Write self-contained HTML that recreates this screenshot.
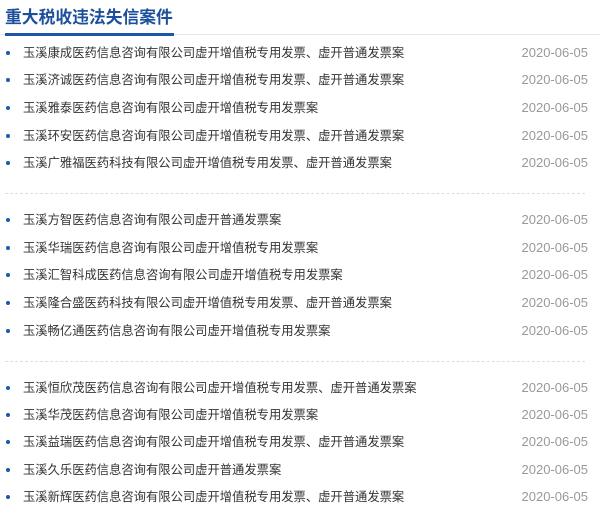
<!DOCTYPE html>
<html><head><meta charset="utf-8"><style>
body{margin:0;width:600px;height:516px;background:#fff;font-family:"Liberation Sans","Noto Sans CJK SC",sans-serif;position:relative;overflow:hidden}
.t{position:absolute;left:5px;top:6px;font-size:16.8px;font-weight:bold;color:#1c4f9c;line-height:24px}
.gl{position:absolute;left:0;top:34px;width:600px;height:1px;background:#e6e6e6}
.bl{position:absolute;left:5px;top:33px;width:169px;height:3px;background:#1c56a8}
.r{position:absolute;left:0;width:600px;height:20px;line-height:20px;font-size:12.3px;color:#333}
.r i{position:absolute;left:6px;top:8px;width:4px;height:4px;border-radius:50%;background:#1c56a8}
.r span{position:absolute;left:23px}
.r b{position:absolute;right:12px;font-weight:normal;color:#999;font-size:13px}
.d{position:absolute;left:5px;width:580px;border-top:1px dashed #ddd}
</style></head><body>
<div class="t">重大税收违法失信案件</div>
<div class="gl"></div><div class="bl"></div>
<div class="r" style="top:43px"><i></i><span>玉溪康成医药信息咨询有限公司虚开增值税专用发票、虚开普通发票案</span><b>2020-06-05</b></div>
<div class="r" style="top:70px"><i></i><span>玉溪济诚医药信息咨询有限公司虚开增值税专用发票、虚开普通发票案</span><b>2020-06-05</b></div>
<div class="r" style="top:98px"><i></i><span>玉溪雅泰医药信息咨询有限公司虚开增值税专用发票案</span><b>2020-06-05</b></div>
<div class="r" style="top:126px"><i></i><span>玉溪环安医药信息咨询有限公司虚开增值税专用发票、虚开普通发票案</span><b>2020-06-05</b></div>
<div class="r" style="top:153px"><i></i><span>玉溪广雅福医药科技有限公司虚开增值税专用发票、虚开普通发票案</span><b>2020-06-05</b></div>
<div class="d" style="top:193px"></div>
<div class="r" style="top:210px"><i></i><span>玉溪方智医药信息咨询有限公司虚开普通发票案</span><b>2020-06-05</b></div>
<div class="r" style="top:238px"><i></i><span>玉溪华瑞医药信息咨询有限公司虚开增值税专用发票案</span><b>2020-06-05</b></div>
<div class="r" style="top:265px"><i></i><span>玉溪汇智科成医药信息咨询有限公司虚开增值税专用发票案</span><b>2020-06-05</b></div>
<div class="r" style="top:293px"><i></i><span>玉溪隆合盛医药科技有限公司虚开增值税专用发票、虚开普通发票案</span><b>2020-06-05</b></div>
<div class="r" style="top:321px"><i></i><span>玉溪畅亿通医药信息咨询有限公司虚开增值税专用发票案</span><b>2020-06-05</b></div>
<div class="d" style="top:361px"></div>
<div class="r" style="top:378px"><i></i><span>玉溪恒欣茂医药信息咨询有限公司虚开增值税专用发票、虚开普通发票案</span><b>2020-06-05</b></div>
<div class="r" style="top:405px"><i></i><span>玉溪华茂医药信息咨询有限公司虚开增值税专用发票案</span><b>2020-06-05</b></div>
<div class="r" style="top:432px"><i></i><span>玉溪益瑞医药信息咨询有限公司虚开增值税专用发票、虚开普通发票案</span><b>2020-06-05</b></div>
<div class="r" style="top:460px"><i></i><span>玉溪久乐医药信息咨询有限公司虚开普通发票案</span><b>2020-06-05</b></div>
<div class="r" style="top:487px"><i></i><span>玉溪新辉医药信息咨询有限公司虚开增值税专用发票、虚开普通发票案</span><b>2020-06-05</b></div>
</body></html>
